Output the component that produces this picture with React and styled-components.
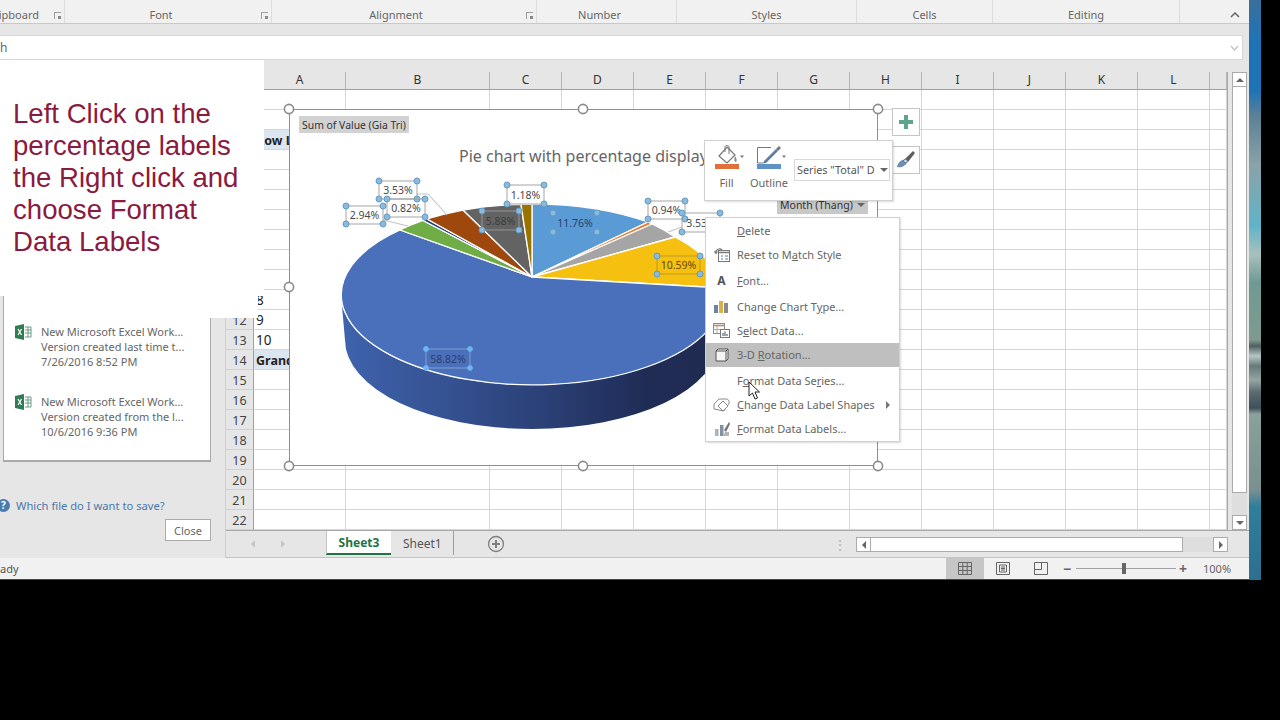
import styled, { createGlobalStyle } from "styled-components";

const FONT = `"Noto Sans", "Open Sans", sans-serif`;

const COLUMNS = ["A", "B", "C", "D", "E", "F", "G", "H", "I", "J", "K", "L", ""];
const ROWS = Array.from({ length: 22 }, (_, i) => i + 1);

// rows above this one sit under the white callout
const FIRST_VISIBLE_ROW = 12;

const CELLS = {
  "3-A": { text: "Row Labels", bold: true, tint: true },
  "11-A": { text: "8" },
  "12-A": { text: "9" },
  "13-A": { text: "10" },
  "14-A": { text: "Grand Total", bold: true, tint: true },
};

const GROUPS = [
  { name: "ipboard", width: 65, end: true, launcher: true },
  { name: "Font", width: 207, pad: 14, launcher: true },
  { name: "Alignment", width: 265, pad: 16, launcher: true },
  { name: "Number", width: 140, pad: 14 },
  { name: "Styles", width: 180 },
  { name: "Cells", width: 136 },
  { name: "Editing", width: 187 },
];

const SLICES = [
  { color: "#5b9bd5", from: [532, 204], to: [648, 222] },
  { color: "#ed7d31", from: [648, 222], to: [652, 224] },
  { color: "#a5a5a5", from: [652, 224], to: [675, 237] },
  { color: "#f5c010", from: [675, 237], to: [722.8, 288] },
  { color: "#4a6fbb", from: [722.8, 288], to: [400, 230], large: 1 },
  { color: "#70ad47", from: [400, 230], to: [423, 220.5] },
  { color: "#264478", from: [423, 220.5], to: [427, 219] },
  { color: "#9e480e", from: [427, 219], to: [463, 210] },
  { color: "#636363", from: [463, 210], to: [521, 204.3] },
  { color: "#997300", from: [521, 204.3], to: [532, 204] },
];

const LABELS = [
  { text: "3.53%", x: 379, y: 181, w: 38, h: 18, box: true },
  { text: "2.94%", x: 346, y: 206, w: 37, h: 18, box: true },
  { text: "0.82%", x: 387, y: 199, w: 38, h: 18, box: true },
  { text: "1.18%", x: 507, y: 185, w: 37, h: 19, box: true },
  { text: "5.88%", x: 482, y: 211, w: 37, h: 19, box: true, color: "#3d3d3d", line: "#9a9a9a" },
  { text: "11.76%", x: 553, y: 213, w: 44, h: 19, color: "#24406f" },
  { text: "0.94%", x: 648, y: 201, w: 37, h: 18, box: true },
  { text: "3.53%", x: 682, y: 213, w: 38, h: 19, box: true },
  { text: "10.59%", x: 657, y: 256, w: 43, h: 18, box: true, color: "#5f4b12", line: "#b99a25" },
  { text: "58.82%", x: 426, y: 349, w: 44, h: 19, box: true, color: "#2e4168", line: "#86a6d8", small: true },
];

const FRAME_HANDLES = [
  [289, 109], [583, 109], [878, 109],
  [289, 287], [878, 287],
  [289, 466], [583, 466], [878, 466],
];

const GlobalStyle = createGlobalStyle`
  html, body {
    margin: 0;
    height: 720px;
    overflow: hidden;
    background: #000;
    font-family: ${FONT};
  }
`;

const ExcelIcon = () => (
  <svg width="17" height="16" viewBox="0 0 17 16">
    <path d="M0 2 L9 0 V16 L0 14 Z" fill="#2f7d55" />
    <path d="M10 3 H16 V13 H10" fill="none" stroke="#6d9c84" strokeWidth="1" />
    <path d="M10 6 H16 M10 9 H16 M13 3 V13" stroke="#6d9c84" strokeWidth="1" />
    <path d="M3 5 L6.5 11 M6.5 5 L3 11" stroke="#fff" strokeWidth="1.2" />
  </svg>
);

const ResetIcon = () => (
  <svg width="16" height="14" viewBox="0 0 16 14">
    <rect x="4.5" y="2.5" width="11" height="11" fill="#fff" stroke="#777" />
    <path d="M4.5 4.5 H15.5" stroke="#777" strokeWidth="1.5" />
    <path d="M7 8 H9 M11 8 H14 M7 11 H9 M11 11 H14" stroke="#5d7896" />
    <path d="M1 5 C2 1 6 0 8 2" fill="none" stroke="#777" strokeWidth="1.2" />
    <path d="M0 3 L2 6.5 L4 3.5 Z" fill="#777" />
  </svg>
);

const BarsIcon = () => (
  <svg width="15" height="13" viewBox="0 0 15 13">
    <rect x="0" y="5" width="4" height="8" fill="#6c84a0" />
    <rect x="5" y="1" width="4" height="12" fill="#d9b24a" />
    <rect x="10" y="3" width="4" height="10" fill="#8a8a8a" />
  </svg>
);

const SelectDataIcon = () => (
  <svg width="17" height="15" viewBox="0 0 17 15">
    <rect x="0.5" y="0.5" width="11" height="10" fill="#fff" stroke="#8a8a8a" />
    <path d="M0.5 2.5 H11.5" stroke="#b98a6a" strokeWidth="1.6" />
    <path d="M4 3 V10 M0 6.5 H11" stroke="#aaa" />
    <rect x="7.5" y="6.5" width="9" height="8" fill="#fff" stroke="#777" />
    <path d="M10 13 V10 M12 13 V8.5 M14 13 V11" stroke="#666" strokeWidth="1.2" />
  </svg>
);

const BoxIcon = () => (
  <svg width="14" height="14" viewBox="0 0 14 14">
    <path d="M1 3 L3 1 H13 V11 L11 13 H1 Z" fill="#f4f4f4" stroke="#555" />
    <path d="M11 13 V3 H1 M11 3 L13 1" fill="none" stroke="#555" />
  </svg>
);

const ShapesIcon = () => (
  <svg width="18" height="14" viewBox="0 0 18 14">
    <path d="M1 6 L6 1 H13 C17 1 17 6 14 8 L11 13 L1 11 Z" fill="none" stroke="#8a8a8a" />
    <path d="M10 3 L15 8 L10 13 L5 8 Z" fill="#fff" stroke="#888" />
  </svg>
);

const FormatLabelsIcon = () => (
  <svg width="16" height="15" viewBox="0 0 16 15">
    <rect x="1" y="8" width="3.5" height="7" fill="#a9b4bd" />
    <rect x="6" y="4" width="3.5" height="11" fill="#83919e" />
    <path d="M10 9 L15 1 L16 3 L12 11 Z" fill="#777" />
    <path d="M11 11 L15 11 L15 15 L9 15 Z" fill="#b4b4b4" />
  </svg>
);

const BucketIcon = () => (
  <ToolSvg width="24" height="24" viewBox="0 0 24 24">
    <path d="M12 2 L20 10 L12 18 L4 11 Z" fill="#fff" stroke="#777" strokeWidth="1.2" />
    <path d="M10 7 V2 C10 0 14 0 14 2 V9" fill="none" stroke="#777" />
    <path d="M20 11 C22 14 22 16 21 17 C19 17 19 14 20 11" fill="#8a8a8a" />
    <path d="M25 10.5 H29 L27 13 Z" fill="#777" />
    <rect x="0" y="19" width="24" height="5" fill="#e0713b" />
  </ToolSvg>
);

const PencilIcon = () => (
  <ToolSvg width="24" height="24" viewBox="0 0 24 24">
    <path d="M6 18 H0.5 V2.5 H14" fill="none" stroke="#777" />
    <path d="M7 16 L19 4 L21 6 L9 18 L6 18.5 Z" fill="#5f7fa3" />
    <path d="M19 4 L22 1 L24 3 L21 6 Z" fill="#777" />
    <path d="M25 10.5 H29 L27 13 Z" fill="#777" />
    <rect x="0" y="19" width="24" height="5" fill="#5f93c8" />
  </ToolSvg>
);

const BrushIcon = () => (
  <svg width="20" height="20" viewBox="0 0 20 20">
    <path d="M9 9 L17 1 L19 3 L12 12 Z" fill="#5e5e5e" />
    <path d="M1 17 C2 12 6 9 9 10 L11 12 C10 16 5 18 1 17 Z" fill="#6c8fb3" />
    <circle cx="9.5" cy="11" r="1.8" fill="#dfe8f0" stroke="#4f7194" />
  </svg>
);

const DataLabel = ({ label }) => {
  const { text, x, y, w, h, box, color, line, small } = label;
  const corners = [[x, y], [x + w, y], [x, y + h], [x + w, y + h]];
  return (
    <g>
      {box && <rect x={x} y={y} width={w} height={h} fill="none" stroke={line || "#9c9c9c"} strokeWidth="0.9" />}
      <LabelText x={x + w / 2} y={y + h / 2 + 4} textAnchor="middle" $color={color}>
        {text}
      </LabelText>
      {corners.map(([cx, cy]) => (
        <circle
          key={`${cx}-${cy}`}
          cx={cx}
          cy={cy}
          r={small ? 2.4 : 3}
          fill={small ? "#6db4f2" : "#8db9db"}
          stroke={small ? "#6db4f2" : "#5f9cc6"}
        />
      ))}
    </g>
  );
};

const PieChart = () => (
  <ChartSvg viewBox="289 109 589 357" width="589" height="357">
    <defs>
      <linearGradient id="pieSide" gradientUnits="userSpaceOnUse" x1="341" y1="0" x2="723" y2="0">
        <stop offset="0" stopColor="#3f63ad" />
        <stop offset="0.3" stopColor="#34508f" />
        <stop offset="0.55" stopColor="#2a3f74" />
        <stop offset="0.8" stopColor="#1f2c55" />
        <stop offset="1" stopColor="#1f2b50" />
      </linearGradient>
    </defs>
    <path d="M341 295 A191 90 0 0 0 723 295 L719 340 A187 89 0 0 1 345 340 Z" fill="url(#pieSide)" />
    {SLICES.map((s) => (
      <path
        key={s.color}
        d={`M532 277 L${s.from[0]} ${s.from[1]} A191 90 0 ${s.large || 0} 1 ${s.to[0]} ${s.to[1]} Z`}
        fill={s.color}
        stroke="#fff"
        strokeWidth="1.3"
        strokeLinejoin="round"
      />
    ))}
    <path d="M417 194 H428 L447 215 M383 220 L408 226 M682 227 L668 232" fill="none" stroke="#c4c4c4" strokeWidth="1.1" />
    {LABELS.map((label) => (
      <DataLabel key={`${label.text}-${label.x}`} label={label} />
    ))}
    {FRAME_HANDLES.map(([cx, cy]) => (
      <circle key={`${cx}-${cy}`} cx={cx} cy={cy} r="4.6" fill="#fff" stroke="#8a8a8a" strokeWidth="1.6" />
    ))}
  </ChartSvg>
);

const MENU = [
  { label: <><u>D</u>elete</> },
  { label: <>Reset to M<u>a</u>tch Style</>, Icon: ResetIcon, sep: true },
  { label: <><u>F</u>ont...</>, glyph: "A", sep: true },
  { label: <>Change Chart T<u>y</u>pe...</>, Icon: BarsIcon },
  { label: <>S<u>e</u>lect Data...</>, Icon: SelectDataIcon },
  { label: <>3-D <u>R</u>otation...</>, Icon: BoxIcon, active: true, sep: true },
  { label: <>F<u>o</u>rmat Data Se<u>r</u>ies...</> },
  { label: <><u>C</u>hange Data Label Shapes</>, Icon: ShapesIcon, more: true },
  { label: <><u>F</u>ormat Data Labels...</>, Icon: FormatLabelsIcon },
];

const App = () => (
  <>
    <GlobalStyle />
    <Screen>
      <Window>
        <Ribbon>
          {GROUPS.map((g) => (
            <RibbonGroup key={g.name} $width={g.width} $pad={g.pad} $end={g.end}>
              {g.name}
              {g.launcher && <Launcher />}
            </RibbonGroup>
          ))}
          <Collapse>
            <svg width="10" height="6" viewBox="0 0 10 6">
              <path d="M1 5 L5 1 L9 5" fill="none" stroke="#666" strokeWidth="1.5" />
            </svg>
          </Collapse>
        </Ribbon>

        <FormulaRow>
          <FormulaBar>
            h
            <svg width="9" height="6" viewBox="0 0 9 6">
              <path d="M1 1 L4.5 5 L8 1" fill="none" stroke="#c4c4c4" strokeWidth="1.4" />
            </svg>
          </FormulaBar>
        </FormulaRow>

        <Workspace>
          <Sidebar>
            <RecoveryPanel>
              <RecoveryItem>
                <ExcelIcon />
                <RecoveryText>
                  <span>New Microsoft Excel Work...</span>
                  <span>Version created last time t...</span>
                  <span>7/26/2016 8:52 PM</span>
                </RecoveryText>
              </RecoveryItem>
              <RecoveryItem>
                <ExcelIcon />
                <RecoveryText>
                  <span>New Microsoft Excel Work...</span>
                  <span>Version created from the l...</span>
                  <span>10/6/2016 9:36 PM</span>
                </RecoveryText>
              </RecoveryItem>
            </RecoveryPanel>
            <HelpRow>
              <HelpIcon>?</HelpIcon>
              Which file do I want to save?
            </HelpRow>
            <CloseButton>Close</CloseButton>
          </Sidebar>

          <SheetArea>
            <SheetRow>
              <Grid>
                <Corner />
                {COLUMNS.map((c, i) => (
                  <ColumnHead key={i}>{c}</ColumnHead>
                ))}
                {ROWS.map((r) => (
                  <GridRowGroup key={r} row={r} />
                ))}
              </Grid>
              <VScroll>
                <ScrollButton>
                  <Arrow $dir="up" />
                </ScrollButton>
                <VThumb />
                <ScrollButton>
                  <Arrow $dir="down" />
                </ScrollButton>
              </VScroll>
            </SheetRow>

            <TabBar>
              <TabNav>
                <Arrow $dir="left" $faint />
                <Arrow $dir="right" $faint />
              </TabNav>
              <SheetTab $active>Sheet3</SheetTab>
              <SheetTab>Sheet1</SheetTab>
              <AddSheet>
                <svg width="18" height="18" viewBox="0 0 18 18">
                  <circle cx="9" cy="9" r="7.5" fill="none" stroke="#808080" strokeWidth="1.3" />
                  <path d="M5 9 H13 M9 5 V13" stroke="#808080" strokeWidth="2" />
                </svg>
              </AddSheet>
              <SplitDots>⋮</SplitDots>
              <HScroll>
                <ScrollButton>
                  <Arrow $dir="left" />
                </ScrollButton>
                <HThumb />
                <ScrollButton>
                  <Arrow $dir="right" />
                </ScrollButton>
              </HScroll>
            </TabBar>
          </SheetArea>
        </Workspace>

        <StatusBar>
          <StatusText>ady</StatusText>
          <ViewButton $active>
            <svg width="14" height="13" viewBox="0 0 14 13">
              <path d="M0.5 0.5 H13.5 V12.5 H0.5 Z M0.5 4.5 H13.5 M0.5 8.5 H13.5 M4.8 0.5 V12.5 M9.2 0.5 V12.5" fill="none" stroke="#666" />
            </svg>
          </ViewButton>
          <ViewButton>
            <svg width="14" height="13" viewBox="0 0 14 13">
              <path d="M0.5 0.5 H13.5 V12.5 H0.5 Z M3.5 3 H10.5 V10 H3.5 Z M5 5 H9 M5 6.5 H9 M5 8 H9" fill="none" stroke="#666" />
            </svg>
          </ViewButton>
          <ViewButton>
            <svg width="14" height="13" viewBox="0 0 14 13">
              <path d="M0.5 0.5 H13.5 V12.5 H0.5 Z M0.5 7.5 H7.5 V0.5" fill="none" stroke="#666" />
            </svg>
          </ViewButton>
          <ZoomSign>−</ZoomSign>
          <ZoomTrack>
            <ZoomThumb />
          </ZoomTrack>
          <ZoomSign>+</ZoomSign>
          <ZoomValue>100%</ZoomValue>
        </StatusBar>

        <Chart>
          <PieChart />
          <FieldButton>Sum of Value (Gia Tri)</FieldButton>
          <ChartTitle>Pie chart with percentage display</ChartTitle>
          <LegendField>
            Month (Thang)
            <Arrow $dir="down" />
          </LegendField>
        </Chart>

        <ChartTool $top={108}>
          <svg width="16" height="16" viewBox="0 0 16 16">
            <path d="M8 1 V15 M1 8 H15" stroke="#5fa58d" strokeWidth="4" />
          </svg>
        </ChartTool>
        <ChartTool $top={146}>
          <BrushIcon />
        </ChartTool>

        <MiniToolbar>
          <MiniTool>
            <BucketIcon />
            Fill
          </MiniTool>
          <MiniTool>
            <PencilIcon />
            Outline
          </MiniTool>
          <SeriesSelect>
            <SeriesName>Series "Total" D</SeriesName>
            <Arrow $dir="down" />
          </SeriesSelect>
        </MiniToolbar>

        <ContextMenu>
          {MENU.map(({ label, Icon, glyph, active, sep, more }, i) => (
            <MenuRow key={i} $active={active} $sep={sep}>
              <MenuIcon>
                {Icon && <Icon />}
                {glyph && <FontGlyph>{glyph}</FontGlyph>}
              </MenuIcon>
              <span>{label}</span>
              {more && <MoreArrow />}
            </MenuRow>
          ))}
        </ContextMenu>

        <Pointer width="13" height="19" viewBox="0 0 13 19">
          <path d="M1 1 V15 L4.5 12 L7 18 L9.5 17 L7 11 H11.5 Z" fill="#fff" stroke="#222" strokeWidth="1" />
        </Pointer>

        <Callout>
          Left Click on the
          <br />
          percentage labels
          <br />
          the Right click and
          <br />
          choose Format
          <br />
          Data Labels
        </Callout>
      </Window>
      <DesktopStrip />
    </Screen>
  </>
);

const GridRowGroup = ({ row }) => (
  <>
    <RowHead>{row >= FIRST_VISIBLE_ROW ? row : ""}</RowHead>
    {COLUMNS.map((c, i) => {
      const cell = CELLS[`${row}-${c}`];
      return (
        <Cell key={i} $bold={cell?.bold} $tint={cell?.tint}>
          {cell?.text}
        </Cell>
      );
    })}
  </>
);

export default App;

const Screen = styled.div`
  display: flex;
  height: 580px;
  width: 1261px;
`;

const Window = styled.div`
  position: relative;
  width: 1249px;
  height: 580px;
  display: flex;
  flex-direction: column;
  overflow: hidden;
  background: #e6e6e6;
  border-bottom: 1px solid #1f5a4a;
  box-sizing: border-box;
`;

const DesktopStrip = styled.div`
  width: 12px;
  height: 580px;
  background: linear-gradient(
    180deg,
    #3a6f9c 0,
    #1f74b5 40px,
    #1f74b5 92px,
    #5b8096 115px,
    #8aa2a8 165px,
    #5fb3c8 225px,
    #a8c0bc 255px,
    #6f9a94 282px,
    #7f9a90 340px,
    #4f5f60 346px,
    #b6c6c6 356px,
    #66787a 366px,
    #95a5a2 380px,
    #5a6c70 392px,
    #3d4f58 408px,
    #8aa09a 414px,
    #7a8f90 490px,
    #2f7f9a 506px,
    #2d6f8f 580px
  );
`;

const Ribbon = styled.div`
  height: 24px;
  flex: none;
  display: flex;
  background: #f1f1f1;
  border-bottom: 1px solid #c9c9c9;
  box-sizing: border-box;
`;

const RibbonGroup = styled.div`
  position: relative;
  width: ${(p) => p.$width}px;
  flex: none;
  box-sizing: border-box;
  padding-top: 6px;
  padding-right: ${(p) => (p.$end ? 25 : p.$pad || 0)}px;
  display: flex;
  align-items: center;
  justify-content: ${(p) => (p.$end ? "flex-end" : "center")};
  border-right: 1px solid #dcdcdc;
  font-size: 11px;
  color: #666;
  white-space: nowrap;
`;

const Launcher = styled.span`
  position: absolute;
  right: 3px;
  top: 12px;
  width: 6px;
  height: 6px;
  border-left: 1px solid #a0a0a0;
  border-top: 1px solid #a0a0a0;
  &::after {
    content: "";
    position: absolute;
    right: 0;
    bottom: 0;
    width: 3px;
    height: 3px;
    background: #8a8a8a;
  }
`;

const Collapse = styled.div`
  flex: 1;
  display: flex;
  align-items: center;
  justify-content: flex-end;
  padding: 6px 9px 0 0;
`;

const FormulaRow = styled.div`
  height: 36px;
  flex: none;
  padding: 11px 6px 0 0;
  box-sizing: border-box;
`;

const FormulaBar = styled.div`
  height: 25px;
  background: #fff;
  border: 1px solid #d8d8d8;
  border-left: none;
  box-sizing: border-box;
  display: flex;
  align-items: center;
  justify-content: space-between;
  padding-right: 3px;
  font-size: 12px;
  color: #666;
`;

const Workspace = styled.div`
  height: 498px;
  flex: none;
  display: flex;
`;

const Sidebar = styled.div`
  width: 226px;
  flex: none;
  padding-left: 3px;
  box-sizing: border-box;
  display: flex;
  flex-direction: column;
  background: #e6e6e6;
  border-right: 1px solid #d0d0d0;
`;

const RecoveryPanel = styled.div`
  width: 208px;
  height: 402px;
  flex: none;
  box-sizing: border-box;
  padding: 264px 0 0 11px;
  display: flex;
  flex-direction: column;
  gap: 25px;
  background: #fff;
  border: 1px solid #a9a9a9;
  border-width: 0 1px 2px 1px;
`;

const RecoveryItem = styled.div`
  display: flex;
  gap: 9px;
`;

const RecoveryText = styled.div`
  display: flex;
  flex-direction: column;
  font-size: 11px;
  line-height: 15px;
  color: #666;
  white-space: nowrap;
`;

const HelpRow = styled.div`
  margin: 35px 0 0 -6px;
  height: 16px;
  display: flex;
  align-items: center;
  gap: 6px;
  font-size: 11.2px;
  color: #4c78a8;
`;

const HelpIcon = styled.span`
  width: 13px;
  height: 13px;
  border-radius: 50%;
  background: #4a7cb0;
  color: #fff;
  font-size: 10px;
  font-weight: 700;
  display: flex;
  align-items: center;
  justify-content: center;
`;

const CloseButton = styled.div`
  margin: 6px 0 0 162px;
  width: 46px;
  height: 22px;
  box-sizing: border-box;
  display: flex;
  align-items: center;
  justify-content: center;
  background: #fff;
  border: 1px solid #ababab;
  font-size: 11px;
  color: #666;
`;

const SheetArea = styled.div`
  flex: 1;
  display: flex;
  flex-direction: column;
  padding-top: 12px;
  box-sizing: border-box;
`;

const SheetRow = styled.div`
  height: 458px;
  flex: none;
  display: flex;
`;

const Grid = styled.div`
  width: 1001px;
  height: 458px;
  flex: none;
  display: grid;
  grid-template-columns: 28px 92px 144px repeat(10, 72px) 17px;
  grid-template-rows: 18px repeat(22, 20px);
  background: #fff;
  box-sizing: border-box;
  box-shadow: 1px 0 0 #a9a9a9;
  margin-right: 5px;
  overflow: hidden;
`;

const Corner = styled.div`
  background: #e6e6e6;
  border-bottom: 1px solid #9f9f9f;
`;

const ColumnHead = styled.div`
  background: #e6e6e6;
  border-right: 1px solid #b5b5b5;
  border-bottom: 1px solid #9f9f9f;
  box-sizing: border-box;
  padding-bottom: 2px;
  display: flex;
  align-items: center;
  justify-content: center;
  font-size: 12px;
  color: #333;
`;

const RowHead = styled.div`
  background: #e6e6e6;
  border-right: 1px solid #9f9f9f;
  border-bottom: 1px solid #d0d0d0;
  box-sizing: border-box;
  padding-top: 1px;
  display: flex;
  align-items: center;
  justify-content: center;
  font-size: 12.5px;
  color: #444;
`;

const Cell = styled.div`
  border-right: 1px solid #d6d6d6;
  border-bottom: 1px solid #d6d6d6;
  box-sizing: border-box;
  background: ${(p) => (p.$tint ? "#dce6f1" : "#fff")};
  font-size: ${(p) => (p.$bold ? 12.5 : 13.5)}px;
  font-weight: ${(p) => (p.$bold ? 700 : 400)};
  line-height: 21px;
  padding-left: 2px;
  color: #222;
  white-space: nowrap;
  overflow: hidden;
`;

const VScroll = styled.div`
  width: 15px;
  height: 458px;
  display: flex;
  flex-direction: column;
  justify-content: space-between;
  background: #dedede;
`;

const VThumb = styled.div`
  flex: 1;
  margin-bottom: 22px;
  background: #fff;
  border: 1px solid #ababab;
  border-width: 0 1px 1px;
`;

const ScrollButton = styled.div`
  width: 15px;
  height: 15px;
  flex: none;
  box-sizing: border-box;
  display: flex;
  align-items: center;
  justify-content: center;
  background: #fff;
  border: 1px solid #ababab;
`;

const Arrow = styled.span`
  width: 0;
  height: 0;
  flex: none;
  border-style: solid;
  border-color: transparent;
  ${(p) => {
    const c = p.$faint ? "#c4c4c4" : "#666";
    if (p.$dir === "up") return `border-width: 0 4px 4px; border-bottom-color: ${c};`;
    if (p.$dir === "down") return `border-width: 4px 4px 0; border-top-color: ${c};`;
    if (p.$dir === "left") return `border-width: 4px 4px 4px 0; border-right-color: ${c};`;
    return `border-width: 4px 0 4px 4px; border-left-color: ${c};`;
  }}
`;

const TabBar = styled.div`
  height: 28px;
  flex: none;
  display: flex;
  align-items: flex-start;
  background: #e6e6e6;
  border-top: 1px solid #a9a9a9;
  border-bottom: 1px solid #c4c4c4;
  box-sizing: border-box;
`;

const TabNav = styled.div`
  width: 100px;
  height: 26px;
  padding: 0 41px 0 25px;
  box-sizing: border-box;
  display: flex;
  align-items: center;
  justify-content: space-between;
`;

const SheetTab = styled.div`
  height: 24px;
  width: ${(p) => (p.$active ? 65 : 63)}px;
  box-sizing: border-box;
  display: flex;
  align-items: center;
  justify-content: ${(p) => (p.$active ? "center" : "flex-start")};
  padding-left: ${(p) => (p.$active ? 0 : 12)}px;
  background: ${(p) => (p.$active ? "#fff" : "transparent")};
  border-bottom: ${(p) => (p.$active ? "2px solid #217346" : "none")};
  border-right: ${(p) => (p.$active ? "none" : "1px solid #9f9f9f")};
  border-left: ${(p) => (p.$active ? "1px solid #c4c4c4" : "none")};
  font-size: 12px;
  font-weight: ${(p) => (p.$active ? 700 : 400)};
  color: ${(p) => (p.$active ? "#217346" : "#555")};
`;

const AddSheet = styled.div`
  height: 26px;
  margin-left: 33px;
  display: flex;
  align-items: center;
`;

const SplitDots = styled.div`
  height: 26px;
  margin-left: 328px;
  width: 10px;
  display: flex;
  align-items: center;
  font-size: 14px;
  color: #b0b0b0;
`;

const HScroll = styled.div`
  margin: 6px 0 0 13px;
  width: 372px;
  display: flex;
  background: #dedede;
`;

const HThumb = styled.div`
  width: 312px;
  margin-right: 30px;
  background: #fff;
  border: 1px solid #ababab;
  border-width: 1px 1px 1px 0;
  box-sizing: border-box;
`;

const StatusBar = styled.div`
  height: 21px;
  flex: none;
  display: flex;
  align-items: center;
  background: #f1f1f1;
  font-size: 11px;
  color: #555;
`;

const StatusText = styled.div`
  width: 946px;
  flex: none;
`;

const ViewButton = styled.div`
  width: 38px;
  height: 21px;
  flex: none;
  display: flex;
  align-items: center;
  justify-content: center;
  background: ${(p) => (p.$active ? "#c6c6c6" : "transparent")};
`;

const ZoomSign = styled.div`
  width: 14px;
  flex: none;
  text-align: center;
  font-size: 14px;
  font-weight: 700;
  color: #666;
`;

const ZoomTrack = styled.div`
  width: 100px;
  height: 1px;
  margin-left: 2px;
  display: flex;
  align-items: center;
  justify-content: center;
  background: #a0a0a0;
`;

const ZoomThumb = styled.div`
  width: 4px;
  height: 11px;
  flex: none;
  margin-right: 4px;
  background: #666;
`;

const ZoomValue = styled.div`
  margin-left: 13px;
  font-size: 11px;
  color: #666;
`;

const Chart = styled.div`
  position: absolute;
  left: 289px;
  top: 109px;
  width: 589px;
  height: 357px;
  box-sizing: border-box;
  background: #fff;
  border: 1px solid #8f8f8f;
`;

const ChartSvg = styled.svg`
  position: absolute;
  left: -1px;
  top: -1px;
  overflow: visible;
`;

const LabelText = styled.text`
  font-family: ${FONT};
  font-size: 10.5px;
  fill: ${(p) => p.$color || "#4a4a4a"};
`;

const FieldButton = styled.div`
  position: absolute;
  left: 9px;
  top: 6px;
  height: 17px;
  padding: 0 3px;
  display: flex;
  align-items: center;
  background: #d2d2d2;
  font-size: 10.4px;
  color: #333;
  white-space: nowrap;
`;

const ChartTitle = styled.div`
  position: absolute;
  left: 169px;
  top: 35px;
  font-size: 16px;
  line-height: 22px;
  color: #666;
  white-space: nowrap;
`;

const LegendField = styled.div`
  position: absolute;
  left: 487px;
  top: 87px;
  width: 91px;
  height: 17px;
  box-sizing: border-box;
  padding: 0 3px 1px;
  display: flex;
  align-items: center;
  gap: 4px;
  background: #c8c8c8;
  font-size: 10.5px;
  color: #333;
  white-space: nowrap;
`;

const ChartTool = styled.div`
  position: absolute;
  left: 892px;
  top: ${(p) => p.$top}px;
  width: 28px;
  height: 28px;
  box-sizing: border-box;
  display: flex;
  align-items: center;
  justify-content: center;
  background: #fff;
  border: 1px solid #c4c4c4;
`;

const MiniToolbar = styled.div`
  position: absolute;
  left: 704px;
  top: 140px;
  width: 189px;
  height: 61px;
  box-sizing: border-box;
  padding: 4px 2px 0 7px;
  display: flex;
  align-items: flex-start;
  gap: 13px;
  background: #fff;
  border: 1px solid #d0d0d0;
  box-shadow: 1px 1px 2px rgba(0, 0, 0, 0.15);
`;

const MiniTool = styled.div`
  width: 30px;
  display: flex;
  flex-direction: column;
  align-items: center;
  gap: 6px;
  font-size: 11px;
  color: #666;
`;

const ToolSvg = styled.svg`
  overflow: visible;
  flex: none;
`;

const SeriesSelect = styled.div`
  width: 96px;
  height: 22px;
  flex: none;
  margin: 14px 0 0 -3px;
  box-sizing: border-box;
  padding: 0 3px 1px 2px;
  display: flex;
  align-items: center;
  gap: 3px;
  background: #fff;
  border: 1px solid #d8d8d8;
`;

const SeriesName = styled.span`
  width: 80px;
  flex: none;
  white-space: nowrap;
  font-size: 10.8px;
  color: #555;
`;

const ContextMenu = styled.div`
  position: absolute;
  left: 705px;
  top: 217px;
  width: 195px;
  box-sizing: border-box;
  padding: 1px 0 0;
  background: #fff;
  border: 1px solid #d0d0d0;
  box-shadow: 1px 1px 2px rgba(0, 0, 0, 0.15);
`;

const MenuRow = styled.div`
  height: 24px;
  box-sizing: border-box;
  padding-bottom: 1px;
  display: flex;
  align-items: center;
  background: ${(p) => (p.$active ? "#bfbfbf" : "transparent")};
  margin-bottom: ${(p) => (p.$sep ? 2 : 0)}px;
  font-size: 11px;
  color: #666;
  white-space: nowrap;
`;

const MenuIcon = styled.span`
  width: 31px;
  flex: none;
  display: flex;
  align-items: center;
  justify-content: center;
`;

const FontGlyph = styled.span`
  font-size: 12px;
  font-weight: 700;
  color: #555;
`;

const MoreArrow = styled.span`
  margin-left: auto;
  margin-right: 9px;
  width: 0;
  height: 0;
  border-style: solid;
  border-width: 4px 0 4px 4px;
  border-color: transparent transparent transparent #777;
`;

const Pointer = styled.svg`
  position: absolute;
  left: 748px;
  top: 381px;
`;

const Callout = styled.div`
  position: absolute;
  left: 0;
  top: 60px;
  width: 264px;
  height: 236px;
  box-sizing: border-box;
  padding: 38px 0 0 13px;
  background: #fff;
  font-family: "Liberation Sans", Arial, sans-serif;
  font-size: 27.6px;
  line-height: 32px;
  color: #8b1a3f;
  white-space: nowrap;
  &::after {
    content: "";
    position: absolute;
    left: 4px;
    top: 236px;
    width: 254px;
    height: 22px;
    background: #fff;
  }
`;
